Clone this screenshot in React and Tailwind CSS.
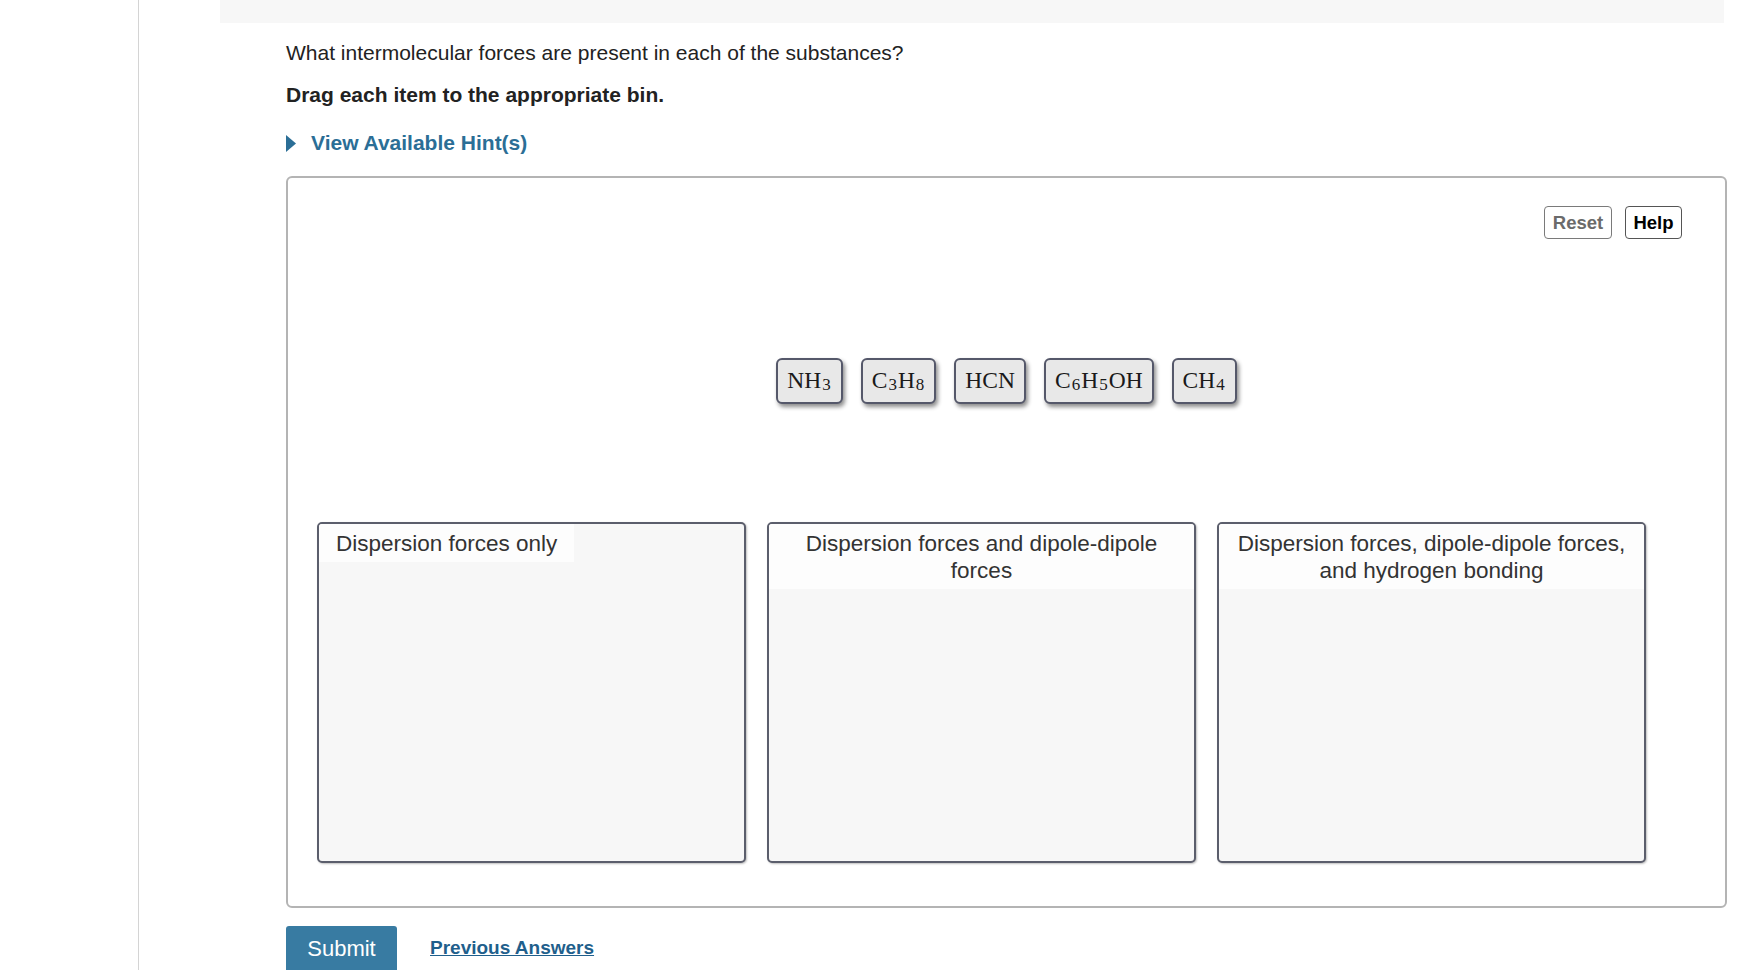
import React from 'react';

const tokens = [
  { id: 'nh3', parts: ['NH', '3'] },
  { id: 'c3h8', parts: ['C', '3', 'H', '8'] },
  { id: 'hcn', parts: ['HCN'] },
  { id: 'c6h5oh', parts: ['C', '6', 'H', '5', 'OH'] },
  { id: 'ch4', parts: ['CH', '4'] },
];

const bins = [
  'Dispersion forces only',
  'Dispersion forces and dipole-dipole forces',
  'Dispersion forces, dipole-dipole forces, and hydrogen bonding',
];

// formula chips: odd indices are subscripts
function Token({ parts }) {
  return (
    <div className="h-[46px] px-[9px] flex items-center rounded-[6px] border-2 border-[#55586a] bg-[#e8e8e8] shadow-[2px_3px_4px_rgba(0,0,0,0.45)] font-['Liberation_Serif',serif] text-[23.5px] text-[#1a1a1a] leading-none">
      {parts.map((p, i) =>
        i % 2 === 1 ? (
          <sub key={i} className="text-[17px] ml-[1px] mr-[1px]">
            {p}
          </sub>
        ) : (
          <span key={i}>{p}</span>
        )
      )}
    </div>
  );
}

function Bin({ label }) {
  return (
    <div className="h-[341px] rounded-[5px] border-2 border-[#5b5e6c] bg-[#f7f7f7] shadow-[1px_1px_2px_rgba(0,0,0,0.25)] overflow-hidden">
      <div className="inline-block max-w-full bg-[#fdfdfd] px-[17px] pt-[6px] pb-[5px] text-center text-[22.5px] leading-[27px] text-[#333]">
        {label}
      </div>
    </div>
  );
}

export default function App() {
  return (
    <div className="min-h-screen flex bg-white font-['Liberation_Sans',Arial,sans-serif] text-[#222]">
      {/* left rail */}
      <div className="w-[139px] shrink-0 border-r border-[#d4d4d4]" />

      <div className="flex-1">
        <div className="ml-[81px] w-[1504px] h-[23px] bg-[#f7f7f7]" />

        <div className="pl-[147px]">
          <p className="mt-[18px] text-[21px] leading-6 text-[#222]">
            What intermolecular forces are present in each of the substances?
          </p>
          <p className="mt-[18px] text-[21px] leading-6 font-bold text-[#222]">
            Drag each item to the appropriate bin.
          </p>

          <button className="mt-[24px] flex items-center gap-[15px] text-[21px] leading-6 font-bold text-[#2b6e96]">
            <svg width="10" height="17" viewBox="0 0 10 17" className="shrink-0">
              <path d="M0 0 L10 8.5 L0 17 Z" fill="#2b6e96" />
            </svg>
            <span>View Available Hint(s)</span>
          </button>

          {/* drag and drop panel */}
          <div className="mt-[21px] w-[1441px] h-[732px] rounded-[6px] border-2 border-[#b4b4b4] flex flex-col">
            <div className="flex justify-end gap-[13px] pt-[28px] pr-[43px]">
              <button className="h-[33px] w-[68px] rounded-[4px] border border-[#7a7a7a] text-[18.5px] font-bold text-[#6b6b6b]">
                Reset
              </button>
              <button className="h-[33px] w-[57px] rounded-[4px] border border-[#555] text-[18.5px] font-bold text-black">
                Help
              </button>
            </div>

            <div className="h-[283px] flex items-center justify-center gap-[18px]">
              {tokens.map((t) => (
                <Token key={t.id} parts={t.parts} />
              ))}
            </div>

            <div className="pl-[29px] grid grid-cols-[429px_429px_429px] gap-[21px]">
              {bins.map((b) => (
                <Bin key={b} label={b} />
              ))}
            </div>
          </div>

          <div className="mt-[18px] flex items-center gap-[33px]">
            <button className="h-[44px] w-[111px] rounded-t-[3px] bg-[#387ba2] text-white text-[22px]">
              Submit
            </button>
            <a href="#" className="text-[19px] font-bold text-[#1f5f8c] underline">
              Previous Answers
            </a>
          </div>
        </div>
      </div>
    </div>
  );
}
